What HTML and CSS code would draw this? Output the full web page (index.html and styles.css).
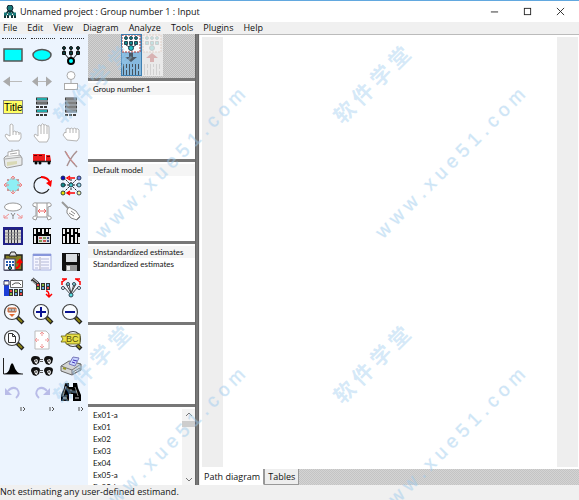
FILE: index.html
```html
<!DOCTYPE html>
<html lang="en">
<head>
<meta charset="utf-8">
<title>Unnamed project : Group number 1 : Input</title>
<link rel="stylesheet" href="styles.css">
</head>
<body>
<svg class="sprite" aria-hidden="true">
  <defs>
    <g id="lights">
      <path d="M0 0h4v7H0zM5 0h4v7H5zM10 0h4v7h-4z" fill="#333"/>
      <path d="M1 2h2M11 5h2" stroke="#e44" stroke-width="2"/><path d="M6 2h2M1 5h2" stroke="#8b4" stroke-width="2"/><path d="M11 2h2M6 5h2" stroke="#6ad" stroke-width="2"/>
    </g>
    <g id="lens">
      <path d="M16 15l6 6" stroke="#222" stroke-width="4"/>
      <path d="M17 16l4 4" stroke="#8b8314" stroke-width="2"/>
      <circle cx="11" cy="10" r="7.500" fill="#f9fcff" stroke="#444" stroke-width="1.200"/>
    </g>
    <g id="face">
      <path d="M0 4q0-4 4-4 5 0 5 3l-1 4-3 2-3-1z" fill="#111"/>
      <path d="M3 4l3-1 1 2-1 3-2-1z" fill="#eee"/><path d="M4 5h2" stroke="#111"/>
    </g>
  </defs>
</svg>

<header class="titlebar">
  <svg class="app-icon" viewBox="0 0 14 14" aria-hidden="true">
    <path d="M7 4L3 9M7 4v6M7 4l4 5M2 13v-3M5 13v-3M9 13v-3M12 13v-3" stroke="#143434" stroke-width="2" fill="none"/>
    <circle cx="7" cy="3" r="3" fill="#197878" stroke="#123"/><path d="M1 9h3M5 9h4M10 9h3" stroke="#197878" stroke-width="3"/>
  </svg>
  <h1>Unnamed project : Group number 1 : Input</h1>
  <div class="window-buttons">
    <button aria-label="Minimize"><svg viewBox="0 0 10 10"><path d="M1 5.500h8"/></svg></button>
    <button aria-label="Maximize"><svg viewBox="0 0 10 10"><rect x="1.500" y="1.500" width="7" height="7"/></svg></button>
    <button aria-label="Close"><svg viewBox="0 0 10 10"><path d="M1 1l8 8M9 1l-8 8"/></svg></button>
  </div>
</header>

<nav class="menubar" aria-label="Main menu">
  <button>File</button><button>Edit</button><button>View</button><button>Diagram</button><button>Analyze</button><button>Tools</button><button>Plugins</button><button>Help</button>
</nav>

<main class="workspace">
  <aside class="toolbox" aria-label="Tools">
    <div class="grips"><i></i><i></i><i></i></div>
    <div class="tools">
      <button aria-label="Observed variable"><svg viewBox="0 0 24 24"><rect x="3" y="6" width="18" height="12" fill="#0ff" stroke="#555" stroke-width="1.500"/></svg></button>
      <button aria-label="Unobserved variable"><svg viewBox="0 0 24 24"><ellipse cx="12" cy="12" rx="9" ry="5.500" fill="#0ff" stroke="#555" stroke-width="1.500"/></svg></button>
      <button aria-label="Latent variable"><svg viewBox="0 0 24 24"><path d="M5 5v5l6 7M12 5v11M19 5v5l-6 7" stroke="#111" fill="none"/><g fill="#073b3b" stroke="#111"><circle cx="5" cy="5" r="1.500"/><circle cx="12" cy="5" r="1.500"/><circle cx="19" cy="5" r="1.500"/><path d="M3.500 8.500h3v3h-3zM10.500 8.500h3v3h-3zM17.500 8.500h3v3h-3z"/></g><circle cx="12" cy="18" r="3" fill="#0ff" stroke="#000" stroke-width="2"/></svg></button>

      <button aria-label="Path"><svg viewBox="0 0 24 24"><path d="M8 12.500h13" stroke="#bbb"/><path d="M2 12.500l7-5v10z" fill="#aaa"/></svg></button>
      <button aria-label="Covariance"><svg viewBox="0 0 24 24"><path d="M7 12.500h10" stroke="#bbb"/><path d="M2 12.500l6-5v10zM22 12.500l-6-5v10z" fill="#aaa"/></svg></button>
      <button aria-label="Unique variable"><svg viewBox="0 0 24 24"><g fill="#fff" stroke="#aaa"><circle cx="12" cy="6.500" r="4"/><path d="M12 10.500v4"/><rect x="5.500" y="14.500" width="13" height="6"/></g></svg></button>

      <button aria-label="Figure caption"><svg viewBox="0 0 24 24"><rect x="2.500" y="5.500" width="19" height="13" fill="#ffff62" stroke="#888"/><text x="3" y="16" class="icon-title">Title</text></svg></button>
      <button aria-label="Variables in model"><svg viewBox="0 0 24 24"><path d="M6 4h12M6 8h12M6 16h12" stroke="#333" stroke-width="3"/><path d="M7 4h10M7 16h10" stroke="#2aa" stroke-width="2"/><path d="M7 8h10" stroke="#aaa"/><path d="M6 12h12M6 20h12" stroke="#333" stroke-width="2" stroke-dasharray="3 1"/></svg></button>
      <button aria-label="Variables in dataset"><svg viewBox="0 0 24 24"><path d="M6 4h12M6 8h12M6 12h12M6 16h12" stroke="#444" stroke-width="3"/><path d="M7 4h10M7 8h10M7 12h10M7 16h10" stroke="#bbb"/><path d="M6 20h12" stroke="#444" stroke-width="2" stroke-dasharray="3 1"/></svg></button>

      <button aria-label="Select one"><svg viewBox="0 0 24 24" class="faint"><path d="M8 20l-4-5 1-2 4 2V4q1-2 3 0v7q2-2 3 0 2-1 3 1 2-1 2 1v4l-2 3zM12 11v3M15 11v3M18 12v2"/></svg></button>
      <button aria-label="Select all"><svg viewBox="0 0 24 24" class="faint"><path d="M9 21l-5-6 1-2 3 2V5q1-2 3 0 1-4 3-1 2-1 3 1 2-1 2 1v11l-2 4zM11 5v8M14 4v9M17 5v8"/></svg></button>
      <button aria-label="Deselect all"><svg viewBox="0 0 24 24" class="faint"><path d="M8 19l-4-5 2-3 1 1V8q2-2 4 0 1-2 3 0 2-2 3 0 2-1 3 1v8l-2 3zM11 8v4M14 8v4M17 8v4"/></svg></button>

      <button aria-label="Duplicate"><svg viewBox="0 0 24 24"><path d="M3 11l2-2 14-1 2 3v7l-15 3-2-2z" fill="#e8eaea" stroke="#9a9a9a"/><path d="M7 9V5l11-2v5" fill="#fff" stroke="#aaa"/><path d="M9 7l7-1M4 12l16-2M11 4V2" stroke="#aaa" fill="none"/><path d="M6 15l10-1v3l-10 2z" fill="#d9d9b6"/></svg></button>
      <button aria-label="Move"><svg viewBox="0 0 24 24"><path d="M3 7h12v7H3zM16 8h4l1 6h-5z" fill="#ed1c1c"/><path d="M4 8.500h3M9 8.500h3M17 9.500h3" stroke="#600"/><path d="M3 14.500h18" stroke="#222" stroke-width="1.500"/><circle cx="6" cy="16" r="1.500"/><circle cx="10" cy="16" r="1.500"/><circle cx="19" cy="16" r="1.500"/></svg></button>
      <button aria-label="Erase"><svg viewBox="0 0 24 24"><path d="M6 4q4 8 12 16M18 4Q12 10 8 19" stroke="#a99292" stroke-width="1.500" fill="none"/><path d="M7 5q3 7 9 12" stroke="#d68d8d" fill="none"/></svg></button>

      <button aria-label="Change shape"><svg viewBox="0 0 24 24"><circle cx="12" cy="12" r="6.500" fill="#8eeff5" stroke="#aaa" stroke-dasharray="2 1"/><path d="M12 3v4M10 5l2-2 2 2M12 17v4M10 19l2 2 2-2M3 12h5M5 10l-2 2 2 2M16 12h5M19 10l2 2-2 2" stroke="#ed8484" fill="none"/><path d="M6 7h2M16 7h2M6 17h2M16 17h2" stroke="#c99" stroke-width="2"/></svg></button>
      <button aria-label="Rotate"><svg viewBox="0 0 24 24"><path d="M17 6A8 8 0 1 0 19 16" fill="none" stroke="#222" stroke-width="1.200"/><path d="M11 4q8 0 9 7" fill="none" stroke="red" stroke-width="2"/><path d="M16 10l5 4 1-7z" fill="red"/></svg></button>
      <button aria-label="Reflect"><svg viewBox="0 0 24 24"><path d="M5 5l14 14M19 5L5 19M12 6v12M5 12h14" stroke="#222" stroke-dasharray="2 1"/><path d="M10 5h6M11 3L8 5l3 2M8 20h8M11 18l-3 2 3 2" stroke="red" fill="none" stroke-width="1.500"/><g stroke="#123" stroke-width=".8"><circle cx="4" cy="5" r="2" fill="#0b0bc8"/><circle cx="20" cy="5" r="2" fill="#6b7cf0"/><circle cx="4" cy="12" r="2" fill="#108888"/><circle cx="20" cy="12" r="2" fill="#8ed9e8"/><circle cx="4" cy="20" r="2" fill="#e8e000"/><circle cx="20" cy="20" r="2" fill="#f7f59a"/><circle cx="12" cy="12" r="2" fill="#4cc"/></g></svg></button>

      <button aria-label="Move parameters"><svg viewBox="0 0 24 24"><ellipse cx="12" cy="8" rx="8.500" ry="4" fill="#fff" stroke="#999"/><path d="M10 14l2 3 2-3M12 17v3" stroke="#888" fill="none"/><path d="M8 15l-5 4M3 16v3h4M16 15l5 4M21 16v3h-4" stroke="#f09090" fill="none"/></svg></button>
      <button aria-label="Reposition"><svg viewBox="0 0 24 24"><path d="M7 4h10v14H7zM7 4q-5-1-4 3l3 1v9q-4 0-3 3l3 1 1-3M17 4q5-1 4 3l-3 1v9q4 0 3 3l-3 1-1-3" stroke="#999" fill="#fff"/><path d="M9 12h6M10 10l-2 2 2 2M14 10l2 2-2 2" stroke="#e66" fill="none"/></svg></button>
      <button aria-label="Touch up"><svg viewBox="0 0 24 24"><path d="M3 3l10 10" stroke="#999" stroke-width="2"/><path d="M8 11l2-3 7 4 4 6-3 3-6-2-4-5z" fill="#fff" stroke="#888"/><path d="M12 12l4 3M10 14l5 3M17 21l4-4" stroke="#888"/></svg></button>

      <button aria-label="Data files"><svg viewBox="0 0 24 24"><rect x="2" y="3" width="20" height="18" fill="#202088"/><rect x="4" y="6" width="16" height="13" fill="#d5d5cf"/><path d="M7.500 5v15M10.500 5v15M13.500 5v15M16.500 5v15" stroke="#334"/><path d="M4 9h16M4 12h16M4 15h16" stroke="#888"/></svg></button>
      <button aria-label="Analysis properties"><svg viewBox="0 0 24 24"><path d="M3 4h18v16H3z"/><path d="M5 5v5M9 5v3M13 5v5M17 5v3M20 5v5M5 12v7" stroke="#eee" stroke-width="2"/><rect x="8" y="12" width="12" height="7" fill="#ddd"/><path d="M9 14h3M13 17h3" stroke="#c55" stroke-width="2"/><path d="M13 14h3M9 17h3" stroke="#795" stroke-width="2"/><path d="M17 14h2M17 17h2" stroke="#458" stroke-width="2"/></svg></button>
      <button aria-label="Calculate estimates"><svg viewBox="0 0 24 24"><path d="M3 4h18v16H3z"/><path d="M5 5v5M9 5v3M13 5v6M17 5v3M20 5v4M5 12v7M9 10v9M13 13v6M17 10v9M20 13v6" stroke="#eee" stroke-width="2"/></svg></button>

      <button aria-label="Copy to clipboard"><svg viewBox="0 0 24 24"><path d="M4 5h17v15H4z" fill="#837d22" stroke="#222" stroke-width="1.500"/><path d="M8 6l2-4h4l2 4z" fill="#ddd" stroke="#222"/><rect x="3" y="9" width="11" height="11" fill="#fff" stroke="#446"/><path d="M5 12h8M5 15h8" stroke="#235bb0" stroke-width="2" stroke-dasharray="2 1"/><circle cx="9" cy="18" r="1.500" fill="#3bd" stroke="#111"/><path d="M15 18q4 0 4-7M16 13l3-3 2 3" stroke="red" stroke-width="2" fill="none"/></svg></button>
      <button aria-label="View text output"><svg viewBox="0 0 24 24"><path d="M3 4h18v16H3z" fill="#f5f6ff" stroke="#a9b2df"/><path d="M3 5h18" stroke="#8796db" stroke-width="2"/><path d="M5 9h4M11 9h8M5 12h3M11 12h8M5 15h4M11 15h8M5 18h3M11 18h8" stroke="#b3b8d8"/><path d="M10 7v13" stroke="#aab"/></svg></button>
      <button aria-label="Save"><svg viewBox="0 0 24 24"><path d="M3 3h18v18H4l-1-1z" fill="#111"/><path d="M7 4h11v8H7z" fill="#d8dce0"/><path d="M7 15h11v6H7z" fill="#999"/><path d="M8 16h3v4H8z" fill="#eee"/><path d="M19 5h1" stroke="#fff"/></svg></button>

      <button aria-label="Object properties"><svg viewBox="0 0 24 24"><path d="M3 4h5v16H3z" fill="#1c3ed8"/><path d="M3 5h5v4H3z" fill="#fff" stroke="#446"/><path d="M9.500 4.500h12v7h-12z" fill="#fff" stroke="#666"/><path d="M11 9l3-2h4l2 2" stroke="#555" fill="none"/><use href="#lights" x="8" y="13"/></svg></button>
      <button aria-label="Drag properties"><svg viewBox="0 0 24 24"><path d="M2 3l6 5" stroke="#333" stroke-width="4"/><path d="M2 2l6 5M2 5l5 4" stroke="#ccc"/><use href="#lights" x="6" y="7"/><path d="M16 15q3 0 3 5M16 18l3 3 3-3" stroke="red" stroke-width="1.500" fill="none"/></svg></button>
      <button aria-label="Preserve symmetries"><svg viewBox="0 0 24 24"><path d="M5 11l7 8 7-8M10 8l2 10 3-10M7 8l5 9M17 8l-5 9" stroke="#444" fill="none"/><path d="M3 6l4-3M3 3h5M21 6l-4-3M21 3h-5M3 9V5M21 9V5" stroke="red" fill="none" stroke-width="1.500"/><g fill="#8dd" stroke="#345"><circle cx="4" cy="12" r="1.500" fill="#fff"/><circle cx="9" cy="8" r="1.500"/><circle cx="15" cy="8" r="1.500"/><circle cx="20" cy="12" r="1.500" fill="#fff"/><circle cx="12" cy="19" r="2" fill="#5dd"/></g></svg></button>

      <button aria-label="Zoom in on area"><svg viewBox="0 0 24 24"><use href="#lens"/><path d="M7 6h8v4H7z" fill="#888" stroke="#e36b32"/><path d="M8 8h7" stroke="#eee" stroke-dasharray="2 1"/><path d="M8 12h6l-3 3z" fill="#e36b32"/></svg></button>
      <button aria-label="Zoom in"><svg viewBox="0 0 24 24"><use href="#lens"/><path d="M6 10h10M11 5v10" stroke="#0b1392" stroke-width="2"/></svg></button>
      <button aria-label="Zoom out"><svg viewBox="0 0 24 24"><use href="#lens"/><path d="M6 10h10" stroke="#0b1392" stroke-width="2"/></svg></button>

      <button aria-label="Zoom page"><svg viewBox="0 0 24 24"><use href="#lens"/><path d="M7.500 5.500h4l3 3v6h-7zM11.500 5.500v3h3" fill="#fff" stroke="#333"/></svg></button>
      <button aria-label="Fit to page"><svg viewBox="0 0 24 24"><path d="M5 3h11l3 3v15H5z" fill="#fff" stroke="#bbb"/><path d="M12 4v4M10 6l2-2 2 2M12 20v-4M10 18l2 2 2-2M5 12h4M7 10l-2 2 2 2M19 12h-4M17 10l2 2-2 2" stroke="#f29b9b" fill="none"/></svg></button>
      <button aria-label="Loupe"><svg viewBox="0 0 24 24"><path d="M17 16l5 5" stroke="#222" stroke-width="4"/><path d="M18 17l3 3" stroke="#8b8314" stroke-width="2"/><circle cx="14" cy="11" r="7.500" fill="#f9fcff" stroke="#444" stroke-width="1.200"/><path d="M2 8h5V6h14v10H7v-2H2l2-3z" fill="#e8e04a" stroke="#665f10" stroke-width=".8"/><text x="7" y="14" class="icon-letters">BC</text></svg></button>

      <button aria-label="Bayesian"><svg viewBox="0 0 24 24"><path d="M2.500 4v16H22" stroke="#222" fill="none"/><path d="M3 20q5-1 6-7 2-7 4-1 2 7 8 8z"/></svg></button>
      <button aria-label="Multiple-group analysis"><svg viewBox="0 0 24 24"><use href="#face" x="1" y="2"/><use href="#face" x="14" y="2"/><use href="#face" x="1" y="13"/><use href="#face" x="14" y="13"/><path d="M10 5.500h3M10 7.500h3M10 16.500h3M10 18.500h3" stroke="#555"/></svg></button>
      <button aria-label="Print"><svg viewBox="0 0 24 24"><path d="M2 12l8-5 12 3v6l-9 5-11-4z" fill="#d4d5d5" stroke="#666"/><path d="M2 12l11 4 9-6M13 16v5" stroke="#777" fill="none"/><path d="M10 10l4-7 6 1-4 8z" fill="#c9d4ff" stroke="#77b"/><path d="M13 8l3 1M14 6l4 1" stroke="#43b"/><path d="M14 18l7-4v2l-7 4z" fill="#f4f4f4" stroke="#777"/><path d="M4 14l3 1" stroke="#992" stroke-width="2"/></svg></button>

      <button aria-label="Undo"><svg viewBox="0 0 24 24"><path d="M7 11q4-5 9-2 4 5-1 9" stroke="#b9bce8" stroke-width="2" fill="none"/><path d="M4 8v7h7z" fill="#b9bce8"/></svg></button>
      <button aria-label="Redo"><svg viewBox="0 0 24 24"><path d="M17 11q-4-5-9-2-4 5 1 9" stroke="#b9bce8" stroke-width="2" fill="none"/><path d="M20 8v7h-7z" fill="#b9bce8"/></svg></button>
      <button aria-label="Search"><svg viewBox="0 0 24 24"><path d="M6 3h4v4h4V3h4l1 5 3 7v6h-8v-7h-4v7H2v-6l3-7z"/><path d="M7 6l-3 10M16 7l3 9M11 10h2" stroke="#888"/><path d="M4 18h4M16 18h4" stroke="#ccc"/></svg></button>
    </div>
    <div class="more" aria-hidden="true"><svg viewBox="0 0 6 6"><path d="M1 1v4M3 1l2 2-2 2"/></svg><svg viewBox="0 0 6 6"><path d="M1 1v4M3 1l2 2-2 2"/></svg><svg viewBox="0 0 6 6"><path d="M1 1v4M3 1l2 2-2 2"/></svg></div>
  </aside>

  <section class="panels" aria-label="Model panels">
    <div class="view-switch">
      <button class="selected" aria-label="View input path diagram"><svg viewBox="0 0 20 42">
        <rect x="1" y="1" width="18" height="17" fill="#fff" stroke="#a33" stroke-dasharray="2 1"/>
        <g fill="#15898b" stroke="#123" stroke-width=".8"><circle cx="5" cy="4" r="1.500"/><circle cx="10" cy="4" r="1.500"/><circle cx="15" cy="4" r="1.500"/><path d="M3.500 7.500h3v3h-3zM8.500 7.500h3v3h-3zM13.500 7.500h3v3h-3z"/><path d="M5 11l5 3 5-3" fill="none"/><circle cx="10" cy="14" r="2.500" fill="#25bec4"/></g>
        <path d="M8 19h4v4h4l-6 5-6-5h4z" fill="#4c5964"/>
        <path d="M2.500 30v11M5.500 30v4M5.500 36v5M8.500 30v11M11.500 30v3M11.500 35v6M14.500 30v11M17.500 30v5M17.500 37v4" stroke="#46535e"/></svg></button>
      <button aria-label="View output path diagram"><svg viewBox="0 0 20 42" class="dim">
        <rect x="1" y="1" width="18" height="17" fill="#fafafa" stroke="#dba" stroke-dasharray="2 1"/>
        <g fill="#9cdcdc" stroke="#aaa" stroke-width=".8"><circle cx="5" cy="4" r="1.500"/><circle cx="10" cy="4" r="1.500"/><circle cx="15" cy="4" r="1.500"/><path d="M3.500 7.500h3v3h-3zM8.500 7.500h3v3h-3zM13.500 7.500h3v3h-3z"/><circle cx="10" cy="14" r="2.500"/></g>
        <path d="M8 28h4v-4h4l-6-5-6 5h4z" fill="#c87c7c"/>
        <path d="M2.500 30v11M5.500 30v4M5.500 36v5M8.500 30v11M11.500 30v3M11.500 35v6M14.500 30v11M17.500 30v5M17.500 37v4" stroke="#bbb"/></svg></button>
    </div>
    <ul class="panel"><li class="current">Group number 1</li></ul>
    <ul class="panel"><li class="current">Default model</li></ul>
    <ul class="panel"><li class="current">Unstandardized estimates</li><li>Standardized estimates</li></ul>
    <ul class="panel"></ul>
    <div class="panel files">
      <ul><li>Ex01-a</li><li>Ex01</li><li>Ex02</li><li>Ex03</li><li>Ex04</li><li>Ex05-a</li><li>Ex05-b</li></ul>
      <div class="scrollbar">
        <button aria-label="Scroll up"><svg viewBox="0 0 8 8"><path d="M1 5l3-3 3 3"/></svg></button>
        <span class="thumb"></span>
        <button aria-label="Scroll down"><svg viewBox="0 0 8 8"><path d="M1 3l3 3 3-3"/></svg></button>
      </div>
    </div>
  </section>

  <section class="document" aria-label="Path diagram">
    <div class="canvas"><div class="page"></div></div>
    <div class="tabs"><button class="active">Path diagram</button><button>Tables</button></div>
  </section>
</main>

<footer class="statusbar">Not estimating any user-defined estimand.</footer>

<svg class="watermark" aria-hidden="true">
  <defs>
    <g id="mark">
      <text class="mark-name" transform="translate(91 84) rotate(-45)">软 件 学 堂</text>
      <text class="mark-url" transform="translate(170 163) rotate(-45)">w w w . x u e 5 1 . c o m</text>
    </g>
  </defs>
  <use href="#mark"/><use href="#mark" x="280"/><use href="#mark" y="280"/><use href="#mark" x="280" y="280"/>
</svg>
</body>
</html>
```
FILE: styles.css
```css
* { box-sizing: border-box; }

body {
  margin: 0;
  height: 100vh;
  display: flex;
  flex-direction: column;
  overflow: hidden;
  background: #f0f0f0;
  color: #111;
  font: 9px/12px "Open Sans", "Noto Sans CJK SC", sans-serif;
}

button {
  margin: 0;
  padding: 0;
  border: 0;
  background: none;
  color: inherit;
  font: inherit;
}

svg { display: block; fill: #000; }
ul { margin: 0; padding: 0; list-style: none; }
.sprite { position: absolute; width: 0; height: 0; }

.titlebar {
  display: flex;
  align-items: center;
  flex: 0 0 22px;
  padding-left: 3px;
  gap: 3px;
  border-top: 1px solid #62a8df;
  background: #fff;
}
.app-icon { width: 14px; height: 14px; }
.titlebar h1 { flex: 1; margin: 0; font-size: 9px; font-weight: 400; }
.window-buttons { display: flex; }
.window-buttons button { display: grid; place-items: center; width: 33px; height: 20px; }
.window-buttons svg { width: 9px; height: 9px; fill: none; stroke: #222; }
.window-buttons { padding-right: 2px; }

.menubar { display: flex; flex: 0 0 12px; gap: 10px; padding-left: 3px; }

.workspace { display: flex; flex: 1; min-height: 0; }

.toolbox {
  display: flex;
  flex-direction: column;
  flex: 0 0 87px;
  padding: 4px 4px 73px 1px;
  background: #ecf4fe;
}
.grips { display: flex; flex: 0 0 4px; gap: 5px; padding-left: 1px; }
.grips i { width: 24px; height: 2px; border-top: 1px dotted #333; }
.tools {
  display: grid;
  flex: 1;
  grid-template: repeat(14, 1fr) / repeat(3, 24px);
  gap: 0 5px;
  min-height: 0;
}
.tools button { display: grid; place-items: center; min-height: 0; }
.tools svg { width: 24px; height: 24px; }
.faint { fill: #fff; stroke: #b5b5b5; }
.icon-title { font: 10px "Liberation Sans", sans-serif; }
.icon-letters { font: 9px "Liberation Sans", sans-serif; fill: #554d08; }
.more { display: flex; gap: 23px; padding: 1px 0 0 19px; }
.more svg { width: 6px; height: 6px; fill: none; stroke: #555; }

.panels {
  display: flex;
  flex-direction: column;
  flex: 0 0 111px;
  gap: 3px;
  border-right: 4px double #666;
  background: #777;
}
.view-switch {
  display: flex;
  flex: 0 0 44px;
  justify-content: center;
  padding-bottom: 2px;
  background: repeating-conic-gradient(#bdbdbd 0 25%, #d2d2d2 0 50%) 0 0 / 2px 2px;
}
.view-switch button { width: 21px; background: #e9e9e9; }
.view-switch .selected { background: #86b9de; outline: 1px solid #3e7fb1; outline-offset: -1px; }
.view-switch svg { width: 20px; height: 42px; }
.dim { opacity: .5; }
.panel { flex: 1; min-height: 0; overflow: hidden; background: #fff; padding-top: 2px; font: 8px/12px Lato, sans-serif; }
.panel li { height: 12px; padding-left: 5px; }
.panel .current { background: #f5f5f5; }
.files { display: flex; }
.files ul { flex: 1; }
.scrollbar { display: flex; flex-direction: column; flex: 0 0 13px; background: #f3f3f3; }
.scrollbar button { display: grid; place-items: center; height: 12px; }
.scrollbar svg { width: 8px; height: 8px; fill: none; stroke: #777; }
.thumb { height: 6px; margin-bottom: auto; background: #cdcdcd; }

.document { display: flex; flex-direction: column; flex: 1; padding-left: 1px; border-top: 1px solid #bbb; }
.canvas { flex: 1; padding: 0 21px; border: 2px solid #fff; border-width: 2px 1px 2px 2px; background: #eee; }
.page { height: 100%; background: #fff; }
.tabs { display: flex; flex: 0 0 16px; background: repeating-conic-gradient(#c4c4c4 0 25%, #d4d4d4 0 50%) 0 0 / 2px 2px; }
.tabs button { padding: 0 3px; border: 1px solid #999; border-top: 0; background: #eee; }
.tabs .active { border-color: #fff #999 #fff #fff; background: #fff; }

.statusbar { flex: 0 0 15px; padding: 1px 0 0; background: #f0f0f0; }

.watermark { position: absolute; inset: 0; width: 100%; height: 100%; pointer-events: none; }
.watermark text { fill: #9ccbee; fill-opacity: .42; text-anchor: middle; dominant-baseline: central; }
.mark-name { font: 700 21px "Noto Sans CJK SC", sans-serif; }
.mark-url { font: 19px "Liberation Sans", sans-serif; stroke: #9ccbee; stroke-opacity: .2; }
```
